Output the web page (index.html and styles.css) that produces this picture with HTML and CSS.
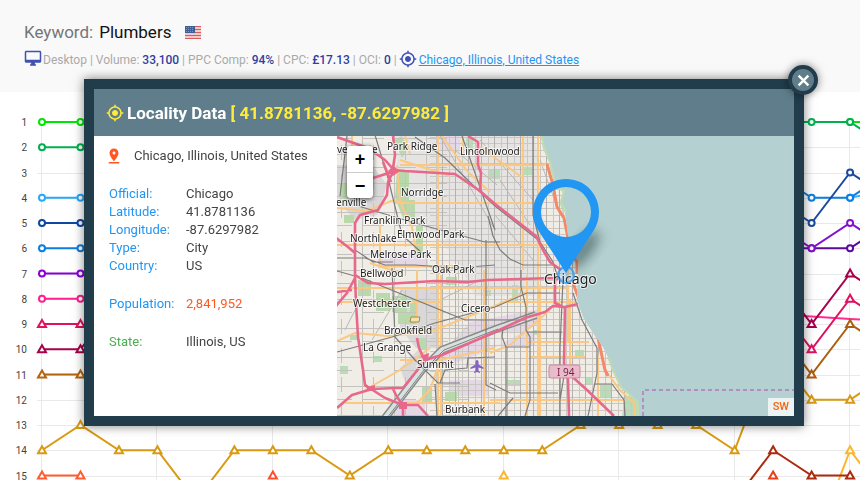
FILE: index.html
```html
<!DOCTYPE html>
<html lang="en">

<head>
  <meta charset="UTF-8">
  <meta name="viewport" content="width=device-width, initial-scale=1.0">
  <title>Keyword: Plumbers</title>
  <link rel="stylesheet" href="styles.css">
</head>

<body>
  <svg class="defs" width="0" height="0">
    <symbol id="icon-gps" viewBox="0 0 24 24">
      <path d="M12 8c-2.21 0-4 1.79-4 4s1.79 4 4 4 4-1.79 4-4-1.79-4-4-4zm8.94 3c-.46-4.17-3.77-7.48-7.94-7.94V1h-2v2.06C6.83 3.52 3.52 6.83 3.06 11H1v2h2.06c.46 4.17 3.77 7.48 7.94 7.94V23h2v-2.06c4.17-.46 7.48-3.77 7.94-7.94H23v-2h-2.06zM12 19c-3.87 0-7-3.13-7-7s3.13-7 7-7 7 3.13 7 7-3.13 7-7 7z"/>
    </symbol>
  </svg>

  <header class="top">
    <h1 class="keyword">Keyword: <b>Plumbers</b>
      <svg class="flag" viewBox="0 0 16 13">
        <rect width="16" height="13" fill="#f4f1f1"/>
        <path d="M0 .5h16M0 3.5h16M0 6.5h16M0 9.5h16M0 12.5h16" stroke="#dc5a5a" stroke-width="1.4"/>
        <rect width="10" height="7" fill="#3f5f94"/>
        <path d="M1 1.5h8M1 3.5h8M1 5.5h8" stroke="#7f97bd" stroke-dasharray="1 1"/>
      </svg>
    </h1>
    <div class="meta">
      <svg class="icon" viewBox="0 1 24 24"><path d="M21 2H3c-1.1 0-2 .9-2 2v12c0 1.1.9 2 2 2h7l-2 3v1h8v-1l-2-3h7c1.1 0 2-.9 2-2V4c0-1.1-.9-2-2-2zm0 12H3V4h18v10z"/></svg>
      <span>Desktop | Volume: <b>33,100</b> | PPC Comp: <b>94%</b> | CPC: <b>£17.13</b> | OCI: <b>0</b> |</span>
      <svg class="icon"><use href="#icon-gps"/></svg>
      <a href="#">Chicago, Illinois, United States</a>
    </div>
  </header>

  <main class="ranks">
    <svg id="chart" class="chart"></svg>
  </main>

  <section class="modal" role="dialog" aria-labelledby="modal-title">
    <header class="modal-head">
      <svg class="icon"><use href="#icon-gps"/></svg>
      <h2 id="modal-title">Locality Data <span>[ 41.8781136, -87.6297982 ]</span></h2>
    </header>
    <div class="modal-body">
      <div class="info">
        <div class="place">
          <svg class="icon" viewBox="0 0 24 24"><path d="M18 8c0-3.31-2.69-6-6-6S6 4.69 6 8c0 4.5 6 11 6 11s6-6.500 6-11zm-8 0c0-1.100.9-2 2-2s2 .9 2 2-.89 2-2 2c-1.100 0-2-.9-2-2zM5 20v2h14v-2H5z"/></svg>
          <span>Chicago, Illinois, United States</span>
        </div>
        <dl>
          <dt>Official:</dt><dd>Chicago</dd>
          <dt>Latitude:</dt><dd>41.8781136</dd>
          <dt>Longitude:</dt><dd>-87.6297982</dd>
          <dt>Type:</dt><dd>City</dd>
          <dt>Country:</dt><dd>US</dd>
        </dl>
        <dl class="population">
          <dt>Population:</dt><dd>2,841,952</dd>
        </dl>
        <dl class="state">
          <dt>State:</dt><dd>Illinois, US</dd>
        </dl>
      </div>

      <div class="map">
        <svg class="tiles" viewBox="337 136 457 280" preserveAspectRatio="xMidYMid slice">
          <defs>
            <pattern id="streets" width="13" height="13" patternUnits="userSpaceOnUse">
              <path d="M.5 0v13M7.500 0v13M0 .5h13M0 7.500h13" stroke="#cbc8c4"/>
              <path d="M.5 0v13" stroke="#b4b2b0"/>
            </pattern>
            <pattern id="blocks" width="32" height="29" patternUnits="userSpaceOnUse">
              <path d="M10.500 0v29M21.500 0v15M0 9.500h32M10 22.500h22" stroke="#c4c2bf" fill="none"/>
            </pattern>
            <clipPath id="land"><path d="M337 136H541L543 148 549 162 552 175 557 188 563 192 560 202 565 212 567 228 570 250 579 262 578 272 577 300 583 317 593 333 603 347 608 357 612 370 620 387 637 402 638 416H337z"/></clipPath>
            <filter id="blur" x="-50%" y="-50%" width="200%" height="200%"><feGaussianBlur stdDeviation="6"/></filter>
          </defs>

          <rect x="337" y="136" width="457" height="280" fill="#b5d0d0"/>

          <g clip-path="url(#land)">
            <rect x="337" y="136" width="310" height="280" fill="#f0ece6"/>
            <path d="M395 136h140l10 100-10 60h-60l-20-40-55-50zM450 225h65v35h-65z" fill="#e6e4e2"/>
            <path d="M337 165h35l15 20-10 30-22 5-18-20zM400 288h36v60h-20l-16-20zM400 368l20-20 4 14-17 25z" fill="#d9d7d7"/>
            <path d="M470 322l70-13v14l-50 27-40 15-15-5zM450 380h38v16h-38zM490 345h45v-12h-45zM440 136h20v14h-20zM378 252h50v16h-50zM395 400h30v16h-30z" fill="#e5d8e6"/>
            <path d="M394 140l8-4 6 12-6 10zM397 170h12v30h6v18h-12l-8-20zM340 183h9v16h-9zM344 215h10v8h-10zM416 225h7v30h-7zM358 280h13v16h-13zM376 293h14v18h-14zM392 296h15v16h-15zM398 312h13v12h-13zM419 338h8v12h-8zM422 386h10v16h-10zM446 277h11v8h-11zM445 392h12v9h-12zM410 300h6v24h-6z" fill="#b9d8ab"/>
            <path d="M524 167h8v8h-8zM488 170h12v9h-12zM466 138h7v14h-7zM512 285h6v18h-6zM506 380h14v6h-14zM575 350h9v9h-9zM585 378h8v7h-8zM565 192l-5 12 7 24-3-10zM350 335h8v5h-8zM374 356h8v6h-8zM340 366h8v8h-8zM485 290h6v6h-6zM533 330h5v5h-5zM600 385h12v12h-12zM625 396h12v20h-15z" fill="#b8dbb8"/>
            <rect x="337" y="260" width="132" height="156" fill="url(#blocks)"/>
            <rect x="337" y="136" width="110" height="124" fill="url(#blocks)"/>
            <rect x="430" y="136" width="210" height="280" fill="url(#streets)"/>
            <path d="M440 136l55 94M455 150l42 35M480 140l53 60M495 215l38 45M500 180l30 45M540 160l20 55M355 310l-10 20M372 340l30-50M440 300l40-20" stroke="#b9b6b4" fill="none"/>

            <g class="arterial">
              <path d="M380 220v45M438 136v280M397 165l3 37 12 25 4 25M417 270v50M441 275v141M484 270v146M523 136v134M538 136v280M527 275v141M540 285v131M552 136v30M568 262v80M570 300v70M463 136v20M598 355v61M352 136v16M370 145v22"/>
              <path d="M395 203h140M337 245h215M400 165h145M380 266h75M337 288h230M337 302h105M500 302h75M527 342h62M530 357h55M345 403h90M490 400h135M440 403h60M400 273l-30-10"/>
              <path d="M442 136l26 36 22 20M480 147l43 31M400 160l50 16M337 341l18-8 33 3 42-4 65-26 32-14M337 208l30 3 24-10 12 1M490 353l20-8 40-35M365 390l35-20 30-22M415 405l15-15 12-35M545 137l4 20 5 12M605 370l15 20 15 14v12M405 136l5 18M400 360h40l55-12"/>
            </g>

            <path d="M385 418l37-48 20-20 54-21 40-14" stroke="#8a8a8a" stroke-width="8" fill="none"/>
            <path d="M385 418l37-48 20-20 54-21 40-14" stroke="#d7e2e0" stroke-width="5" fill="none"/>
            <path d="M387 418l37-48 20-20 54-21" stroke="#808080" fill="none"/>

            <g class="rail">
              <path d="M462 136l33 94M415 137l30 21 33 32 17 16 42 33M375 135l13 43 14 57 20 18M355 205l23 7 44 13 26 7 37 10h15M488 216l5 20 7 14 10 9 13 6h30M533 136v79l7 27 13 20 5 16"/>
              <path d="M337 258l28 0 20 7h30l40 3 40-3M355 225v25l18 12h20M337 352l55-15 43-14 60-16 32-14h33M337 271l25 7 103 42h60M392 268l3 69 20 23 23 23h22M495 357l-27 1-1 10-22 2-5 13M435 384l2 32M486 240v145l10 5"/>
              <path d="M521 270v17l5 20v23l4 7v63l-5 16M573 293l9 27 15 28v25l-9 43M594 384h18l12 16 1 16M503 328l-1 9 4 10v69M506 347h24M490 383l20 10h48M513 398l-15 18M560 416V347l3-67M527 332h35M560 400l5-30M347 136l-7 60"/>
            </g>

            <g class="motorway">
              <path d="M337 137l31 11 17 12 9 10 11 1 50 3 25 17 15 13 41 32 7 14 7 12 11 8M394 170l-6 12-1 13-9 15-18 5-5 8v52l1 28 2 34 5 33 2 15 5 4M393 168l2-13-2-19M392 172l-19 6-10-10M383 162l8 20M468 136l10 6v23l3 8-1 18M335 237l13 10 7 6"/>
              <path d="M355 275l13 8 17 1 33-2 17-1 33 1 20-2 65-2 9 2M335 307l12-14 8-15M337 292l15-2M337 408l15-13 20-6 23-1h8l12-15 10-13 17-5 53-23 30-14 20-6 8-6 12 1 13-3M555 280v23l10 5-1 55 4 17 1 36M568 373l19 17 27 26M365 385l20 13 18 7h15l10 11M403 405v11M392 387l5 10 6 8M417 338l2 10 6 13"/>
            </g>
            <path d="M547 164l6 21 4 22 7 11 6 30 7 14v12M573 283l9 24 16 31 7 32 3 6" stroke="#f58866" stroke-width="3" fill="none"/>
            <path d="M388 171l5-5 7 5-7 5zM367 387l8-2v6h-8zM399 402h8v7h-8zM420 356l9-3-1 8z" fill="#e8688b"/>
            <path d="M411 317h9l-1 5h-9z" fill="#f4e3a4" stroke="#a58a4f"/>
          </g>

          <path d="M542 136l2 12 6 14 3 13 4 12 7 4-3 11 5 10M608 357l5 13 8 17 17 15v14" stroke="#bfdcb0" stroke-width="2" fill="none"/>
          <path d="M643 416v-26h151" stroke="#b18fc6" stroke-width="2" stroke-dasharray="4 3" fill="none"/>
          <path d="M477 360c-1 0-1.500 1-1.500 2v2.500l-5 3v1.500l5-1.500v3l-1.500 1.500v1l3-1 3 1v-1l-1.500-1.500v-3l5 1.500v-1.500l-5-3V362c0-1-.5-2-1.500-2z" fill="#8461c4"/>
          <rect x="549" y="365" width="31" height="13" rx="2" fill="#e9bccb" stroke="#cf879f"/>

          <g class="labels">
            <text x="337" y="153">ve</text>
            <text x="372" y="153">e</text>
            <text x="387" y="150">Park Ridge</text>
            <text x="460" y="155">Lincolnwood</text>
            <text x="401" y="196">Norridge</text>
            <text x="336" y="206">enville</text>
            <text x="364" y="224">Franklin Park</text>
            <text x="350" y="242">Northlake</text>
            <text x="397" y="238">Elmwood Park</text>
            <text x="370" y="258">Melrose Park</text>
            <text x="360" y="277">Bellwood</text>
            <text x="432" y="273">Oak Park</text>
            <text x="353" y="307">Westchester</text>
            <text x="461" y="312">Cicero</text>
            <text x="384" y="334">Brookfield</text>
            <text x="363" y="351">La Grange</text>
            <text x="417" y="368">Summit</text>
            <text x="445" y="413">Burbank</text>
            <text x="557" y="376" class="shield">I 94</text>
            <text x="544" y="284" class="city">Chicago</text>
          </g>

          <ellipse cx="583" cy="250" rx="9" ry="24" transform="rotate(38 583 250)" fill="#1c3b3b" opacity=".5" filter="url(#blur)"/>
          <circle cx="566" cy="275" r="8" fill="#2196f3" fill-opacity=".2" stroke="#2196f3" stroke-width="2" stroke-opacity=".7"/>
          <path fill-rule="evenodd" d="M566 179c-18.500 0-33 15-33 33 0 7 2 13 5 18l28 43 28-43c3-5 5-11 5-18 0-18-14.500-33-33-33zm0 8a25 25 0 1 1 0 50 25 25 0 0 1 0-50z" fill="#2196f3"/>
        </svg>
        <div class="zoom">
          <button type="button" aria-label="Zoom in">+</button>
          <button type="button" aria-label="Zoom out">−</button>
        </div>
        <a class="credit" href="#">SW</a>
      </div>
    </div>
    <button type="button" class="close" aria-label="Close">
      <svg viewBox="0 0 12 12"><path d="M1.500 1.500l9 9M10.500 1.500l-9 9"/></svg>
    </button>
  </section>

  <script src="chart.js"></script>
</body>

</html>
```
FILE: styles.css
```css
* {
  box-sizing: border-box;
  margin: 0;
  padding: 0;
}

body {
  height: 100vh;
  overflow: hidden;
  background-color: #fff;
  font-family: Roboto, sans-serif;
  font-size: 12px;
  color: #444;
}

.defs {
  position: absolute;
}

.icon {
  flex: none;
  width: 18px;
  height: 18px;
  fill: currentColor;
}

.top {
  height: 92px;
  padding: 22px 24px 0;
  background-color: #f9f9f9;
}

.keyword {
  display: flex;
  align-items: center;
  gap: 6px;
  font-size: 17px;
  line-height: 20px;
  font-weight: 400;
  color: #757575;
}

.keyword b {
  font-weight: 400;
  color: #111;
}

.flag {
  width: 16px;
  height: 13px;
  margin-left: 8px;
}

.meta {
  display: flex;
  align-items: center;
  margin-top: 8px;
  line-height: 20px;
  color: #aaa;
}

.meta .icon {
  margin-bottom: 2px;
  color: #3f51b5;
}

.meta span {
  margin: 0 2px 0 1px;
}

.meta b {
  font-weight: 500;
  color: #303f9f;
}

.meta a {
  margin-left: 2px;
  color: #2196f3;
}

/* rank chart */
.ranks {
  overflow: hidden;
}

.chart {
  display: block;
  width: 100%;
  height: 388px;
}

.chart text {
  font-size: 10px;
  fill: #444;
  text-anchor: end;
}

.chart .grid {
  stroke: #e9e9e9;
  stroke-width: 1;
}

.chart .line {
  fill: none;
  stroke-width: 2;
}

.chart .point {
  fill: #fff;
  stroke-width: 2;
}

/* modal */
.modal {
  position: fixed;
  top: 79px;
  left: 84px;
  right: 56px;
  border: 10px solid #213c4b;
  background-color: #fff;
  box-shadow: 0 0 10px rgba(0, 0, 0, .5);
}

.modal-head {
  display: flex;
  align-items: center;
  gap: 3px;
  height: 47px;
  padding: 0 12px;
  background-color: #607d8b;
  color: #fff;
}

.modal-head h2 {
  font-size: 17px;
  font-weight: 700;
}

.modal-head .icon,
.modal-head span {
  color: #ffeb3b;
}

.modal-body {
  display: flex;
}

.info {
  flex: none;
  width: 243px;
  padding: 11px 0 0 15px;
  font-size: 13px;
  line-height: 18px;
}

.place {
  display: flex;
  gap: 11px;
  margin-bottom: 20px;
}

.place .icon {
  margin-left: -4px;
  color: #ff5722;
}

.info dl {
  display: grid;
  grid-template-columns: 77px 1fr;
  margin-bottom: 20px;
}

.info dt {
  color: #2196f3;
}

.population dd {
  color: #ff5722;
}

.info .state dt {
  color: #4caf50;
}

.map {
  position: relative;
  flex: 1;
  height: 280px;
  overflow: hidden;
}

.tiles {
  display: block;
  width: 100%;
  height: 100%;
}

.arterial {
  fill: none;
  stroke: #fbc883;
  stroke-width: 2;
}

.rail {
  fill: none;
  stroke: #7c7c7c;
  stroke-width: 1.2;
}

.motorway {
  fill: none;
  stroke: #e8688b;
  stroke-width: 2.6;
  stroke-linejoin: round;
}

.labels {
  font-family: "Noto Sans", sans-serif;
  font-size: 10px;
  fill: #222;
  stroke: rgba(255, 255, 255, .7);
  stroke-width: 2px;
  paint-order: stroke;
}

.labels .shield {
  fill: #7b2346;
  stroke: none;
}

.labels .city {
  font-size: 14px;
}

.zoom {
  position: absolute;
  top: 10px;
  left: 10px;
  width: 26px;
  border-radius: 4px;
  overflow: hidden;
  box-shadow: 0 1px 5px rgba(0, 0, 0, .65);
}

.zoom button {
  display: block;
  width: 26px;
  height: 26px;
  border: 0;
  background-color: #fff;
  font: bold 18px/26px "Liberation Sans", sans-serif;
  color: #000;
}

.zoom button + button {
  border-top: 1px solid #ccc;
}

.credit {
  position: absolute;
  right: 0;
  bottom: 0;
  padding: 0 5px;
  background-color: rgba(255, 255, 255, .75);
  font-size: 11px;
  font-weight: 500;
  line-height: 18px;
  color: #f26411;
  text-decoration: none;
}

.close {
  position: absolute;
  top: -24px;
  right: -24px;
  display: flex;
  align-items: center;
  justify-content: center;
  width: 30px;
  height: 30px;
  border: 4px solid #213c4b;
  border-radius: 50%;
  background-color: #607d8b;
  box-shadow: 0 0 8px rgba(0, 0, 0, .5);
}

.close svg {
  flex: none;
  width: 13px;
  height: 13px;
  stroke: #fff;
  stroke-width: 2.2;
}
```
FILE: chart.js
```javascript
var chart = document.getElementById('chart');
var ns = 'http://www.w3.org/2000/svg';
var left = 42;
var stepX = 38.48;
var stepY = 25.25;

// each series: colour, marker, index of the first day, ranks
var series = [
  ['#00e600', 'circle', 0, [1, 1]],
  ['#00b050', 'circle', 0, [2, 2]],
  ['#29a9f5', 'circle', 0, [4, 4]],
  ['#0d47a1', 'circle', 0, [5, 5]],
  ['#0b7fe0', 'circle', 0, [6, 6]],
  ['#8a00d4', 'circle', 0, [7, 7]],
  ['#ff1f8f', 'circle', 0, [8, 8]],
  ['#e0115f', 'triangle', 0, [9, 9]],
  ['#a8004b', 'triangle', 0, [10, 10, 8]],
  ['#b5650f', 'triangle', 0, [11, 11]],
  ['#ff5c33', 'triangle', 0, [15, 15]],
  ['#ff4f2e', 'triangle', 6, [15]],
  ['#fbb72c', 'triangle', 12, [15]],
  ['#e6401c', 'triangle', 19, [15]],
  ['#00e600', 'circle', 21, [1, 1]],
  ['#00b050', 'circle', 19, [1, 1, 1, 2]],
  ['#35aef5', 'circle', 21, [4, 3.7]],
  ['#0b7fe0', 'circle', 19, [3, 4, 4, 3]],
  ['#1a4aa0', 'circle', 19, [4, 5, 3, 4]],
  ['#5c0a9c', 'circle', 19, [6, 6, 6, 5]],
  ['#8412cc', 'circle', 19, [5, 6, 5, 6]],
  ['#ff2d92', 'none', 19, [8.6, 8.7, 8.8, 8.9]],
  ['#a8004b', 'triangle', 19, [7, 9, 7, 8]],
  ['#e0115f', 'triangle', 19, [8, 10, 8, 9]],
  ['#ad5f10', 'triangle', 19, [9, 11, 9, 10]],
  ['#d99a12', 'triangle', 0, [14, 13, 14, 14, 16, 14, 14, 14, 15, 14, 14, 14, 14, 14, 13, 13, 13, 13, 14, 10, 12, 12, 11]],
  ['#fbb72c', 'triangle', 20, [18, 14, 16]],
  ['#ad2a0c', 'triangle', 18, [16, 14, 15, 15]]
];

function px(i) {
  return left + i * stepX;
}

function py(rank) {
  return 30 + (rank - 1) * stepY;
}

function add(name, attrs) {
  var el = document.createElementNS(ns, name);
  for (var key in attrs) {
    el.setAttribute(key, attrs[key]);
  }
  chart.appendChild(el);
  return el;
}

for (var r = 1; r <= 15; r++) {
  var gy = Math.round(py(r)) + 0.5;
  add('line', { 'class': 'grid', x1: 37, y1: gy, x2: '100%', y2: gy });
  add('text', { x: 27, y: Math.round(py(r)) + 4 }).textContent = r;
}

for (var c = 0; c <= 21; c += 3) {
  var gx = Math.round(px(c)) - 0.5;
  add('line', { 'class': 'grid', x1: gx, y1: 30, x2: gx, y2: '100%' });
}

series.forEach(function (s) {
  var points = s[3].map(function (rank, i) {
    return [px(s[2] + i), py(rank)];
  });
  add('polyline', { 'class': 'line', stroke: s[0], points: points.join(' ') });
  points.forEach(function (p) {
    if (s[1] === 'circle') {
      add('circle', { 'class': 'point', stroke: s[0], cx: p[0], cy: p[1], r: 3 });
    }
    if (s[1] === 'triangle') {
      add('path', { 'class': 'point', stroke: s[0], d: 'M' + p[0] + ' ' + (p[1] - 4) + 'l4 7h-8z' });
    }
  });
});
```
